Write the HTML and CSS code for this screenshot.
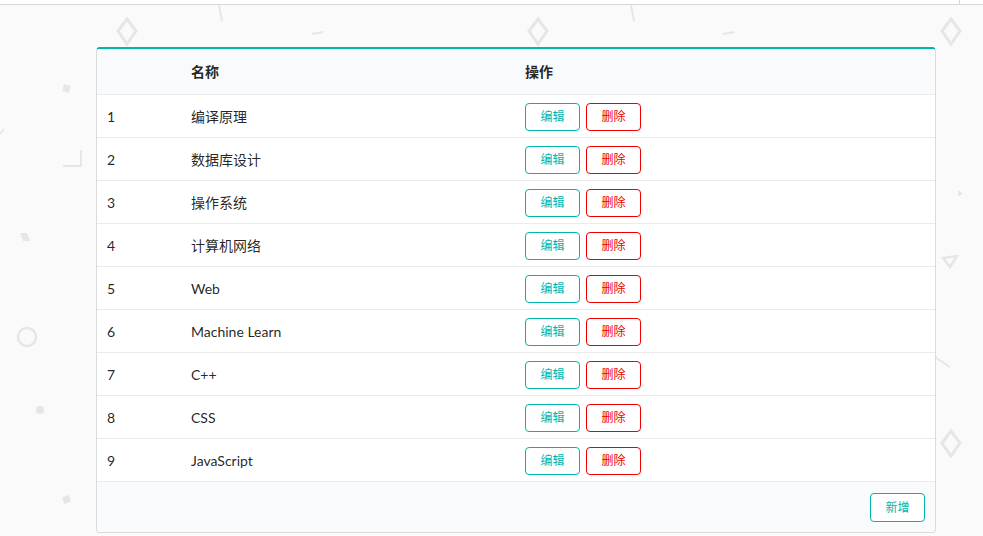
FILE: index.html
```html
<!DOCTYPE html>
<html lang="zh">
<head>
<meta charset="utf-8">
<title>课程列表</title>
<link rel="stylesheet" href="styles.css">
</head>
<body>
<div class="topbar"><span class="topbar-tick"></span></div>
<svg class="decor" width="983" height="536" viewBox="0 0 983 536" aria-hidden="true">
  <g fill="none" stroke="#e6e6e6" stroke-width="3" stroke-linejoin="miter">
    <polygon points="127,19 136,31 127,44 118,31"/>
    <polygon points="538,19 547,31 538,44 529,31"/>
    <polygon points="951,19 960,31 951,44 942,31"/>
    <polygon points="951,431 960,443 951,456 942,443"/>
  </g>
  <g fill="none" stroke="#e6e6e6" stroke-width="2">
    <line x1="219" y1="5" x2="222" y2="21"/>
    <line x1="631" y1="5" x2="634" y2="21"/>
    <line x1="312" y1="34" x2="323" y2="32"/>
    <line x1="723" y1="34" x2="734" y2="32"/>
    <polyline points="81,150 81,166 63,166"/>
    <line x1="0" y1="134" x2="4" y2="129"/>
    <line x1="935" y1="357" x2="950" y2="367"/>
    <polygon points="943,258 957,256 950,267" stroke-width="2.5"/>
    <circle cx="27" cy="337" r="9" stroke-width="2.5"/>
  </g>
  <g fill="#e6e6e6">
    <rect x="63" y="85" width="7" height="7" transform="rotate(15 66.5 88.5)"/>
    <rect x="63" y="496" width="7" height="7" transform="rotate(-18 66.5 499.5)"/>
    <polygon points="20,233 27,233 30,241 23,241"/>
    <circle cx="40" cy="410" r="4"/>
    <polygon points="958,190 963,194 958,196"/>
  </g>
</svg>
<main class="page">
  <section class="grid-table">
    <div class="row head">
      <div class="cell"></div>
      <div class="cell">名称</div>
      <div class="cell">操作</div>
    </div>
    <div class="row"><div class="cell">1</div><div class="cell">编译原理</div><div class="cell actions"><button class="btn teal">编辑</button><button class="btn red">删除</button></div></div>
    <div class="row"><div class="cell">2</div><div class="cell">数据库设计</div><div class="cell actions"><button class="btn teal">编辑</button><button class="btn red">删除</button></div></div>
    <div class="row"><div class="cell">3</div><div class="cell">操作系统</div><div class="cell actions"><button class="btn teal">编辑</button><button class="btn red">删除</button></div></div>
    <div class="row"><div class="cell">4</div><div class="cell">计算机网络</div><div class="cell actions"><button class="btn teal">编辑</button><button class="btn red">删除</button></div></div>
    <div class="row"><div class="cell">5</div><div class="cell">Web</div><div class="cell actions"><button class="btn teal">编辑</button><button class="btn red">删除</button></div></div>
    <div class="row"><div class="cell">6</div><div class="cell">Machine Learn</div><div class="cell actions"><button class="btn teal">编辑</button><button class="btn red">删除</button></div></div>
    <div class="row"><div class="cell">7</div><div class="cell">C++</div><div class="cell actions"><button class="btn teal">编辑</button><button class="btn red">删除</button></div></div>
    <div class="row"><div class="cell">8</div><div class="cell">CSS</div><div class="cell actions"><button class="btn teal">编辑</button><button class="btn red">删除</button></div></div>
    <div class="row"><div class="cell">9</div><div class="cell">JavaScript</div><div class="cell actions"><button class="btn teal">编辑</button><button class="btn red">删除</button></div></div>
    <div class="foot"><button class="btn teal add">新增</button></div>
  </section>
</main>
</body>
</html>
```
FILE: styles.css
```css
* { box-sizing: border-box; }
html, body { margin: 0; padding: 0; }
body {
  background: #fafafa;
  font-family: Lato, "Noto Sans CJK SC", "Noto Sans", sans-serif;
  font-size: 14px;
  color: rgba(0,0,0,0.87);
  width: 983px;
  height: 536px;
  overflow: hidden;
  position: relative;
}
.topbar {
  height: 5px;
  background: #fff;
  border-bottom: 1px solid #d6d6d6;
  position: relative;
}
.topbar-tick {
  position: absolute;
  left: 959px;
  top: 0;
  width: 1px;
  height: 4px;
  background: #d6d6d6;
}
.decor {
  position: absolute;
  left: 0;
  top: 0;
  z-index: 0;
}
.page {
  position: relative;
  z-index: 1;
  padding: 42px 0 0 96px;
}
.grid-table {
  width: 840px;
  background: #fff;
  border: 1px solid #dadbdb;
  border-top: 2px solid #00b5ad;
  border-radius: 4px;
  overflow: hidden;
}
.row {
  display: grid;
  grid-template-columns: 84px 334px 1fr;
  align-items: center;
  height: 43px;
  border-bottom: 1px solid #ebebec;
}
.row.head {
  height: 46px;
  background: #f9fafb;
  font-weight: 700;
}
.cell {
  padding: 2px 10px 0;
  line-height: 20px;
}
.row.head .cell { padding-top: 0; }
.actions {
  display: flex;
  gap: 6px;
  padding-top: 1px;
}
.btn {
  width: 55px;
  height: 28px;
  padding: 1px 0 0;
  background: #fff;
  border: 1px solid;
  border-radius: 4px;
  font-family: Lato, "Noto Sans CJK SC", sans-serif;
  font-size: 12px;
  line-height: 24px;
  cursor: pointer;
}
.btn.teal { color: #00b5ad; border-color: #00b5ad; }
.btn.red { color: #ee0000; border-color: #ee0000; }
.btn.add { height: 29px; }
.foot {
  height: 50px;
  background: #f9fafb;
  display: flex;
  justify-content: flex-end;
  align-items: center;
  padding-right: 10px;
}
```
